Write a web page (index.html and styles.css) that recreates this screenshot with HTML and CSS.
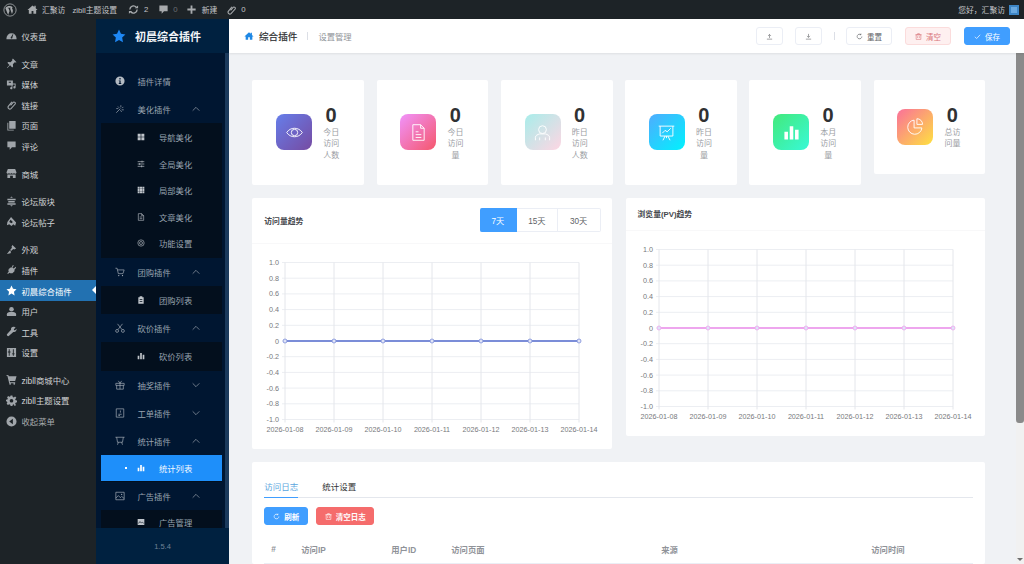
FILE: index.html
```html
<!DOCTYPE html>
<html lang="en">
<head>
  <meta charset="UTF-8" />
  <meta name="viewport" content="width=device-width, initial-scale=1.0" />
  <title>初晨综合插件</title>
  <link rel="stylesheet" href="styles.css">
</head>
<body>
  <svg class="sprite" xmlns="http://www.w3.org/2000/svg">
    <symbol id="i-wp" viewBox="0 0 24 24"><circle cx="12" cy="12" r="10.5" fill="none" stroke="currentColor" stroke-width="1.4"/><path fill="currentColor" d="M4 8.5l4.8 12.2 2.4-7-1.7-4.6-1.4-.2v-.7h5.200v.7l-1.300.2 3.400 9.900 1.300-4.200c.7-2.300-.2-3.600-.9-4.800-.5-1-.3-2.300 1-2.700-3.500-3.300-9.600-2.800-12.800 1.200z"/></symbol>
    <symbol id="i-home" viewBox="0 0 24 24"><path fill="currentColor" d="M12 3L1 13h3v8h6v-6h4v6h6v-8h3l-4-3.600V4h-3v2.700z"/></symbol>
    <symbol id="i-update" viewBox="0 0 24 24"><path fill="none" stroke="currentColor" stroke-width="3" d="M4 12a8 8 0 0 1 14-5M20 12a8 8 0 0 1-14 5"/><path fill="currentColor" d="M15 9h7V3zM9 15H2v6z"/></symbol>
    <symbol id="i-comment" viewBox="0 0 24 24"><path fill="currentColor" d="M3 3h18v13h-8l-5 5v-5H3z"/></symbol>
    <symbol id="i-plus" viewBox="0 0 24 24"><path fill="currentColor" d="M10 3h4v7h7v4h-7v7h-4v-7H3v-4h7z"/></symbol>
    <symbol id="i-link" viewBox="0 0 24 24"><path fill="none" stroke="currentColor" stroke-width="2.400" d="M10 14l6-7a3 3 0 0 1 4 4l-9 10a4 4 0 0 1-6-5l8-10"/></symbol>
    <symbol id="i-gauge" viewBox="0 0 24 24"><path fill="currentColor" d="M1 18a11 11 0 0 1 22 0v2H1zm10-3a2 2 0 1 0 3 1l2-7-1-.5z"/></symbol>
    <symbol id="i-pin" viewBox="0 0 24 24"><path fill="currentColor" d="M15 1l8 8-2 1-2-.5-4 4 .5 5-2 2-4.500-4.500L3 22l-1-1 5.500-6L3 10.500l2-2 5 .5 4-4L13.500 3z"/></symbol>
    <symbol id="i-media" viewBox="0 0 24 24"><path fill="currentColor" d="M2 3h13v11H2zm4 3v2h5V6zM21 10v8a2.500 2.500 0 1 1-2-2.400V12h-5v8a2.500 2.500 0 1 1-2-2.400V16h0l1-6z"/></symbol>
    <symbol id="i-pages" viewBox="0 0 24 24"><path fill="currentColor" d="M7 2h14v17H7zM3 6h2v15h12v2H3z"/></symbol>
    <symbol id="i-store" viewBox="0 0 24 24"><path fill="currentColor" d="M4 2h16l3 8a3 3 0 0 1-5.500 1 3 3 0 0 1-5.500 0 3 3 0 0 1-5.500 0A3 3 0 0 1 1 10zM3 14h18v8h-6v-5H9v5H3z"/></symbol>
    <symbol id="i-forum" viewBox="0 0 24 24"><path fill="currentColor" d="M12 1l3 3H9zM3 6h18v3H3zM5 11h14v3H5zM3 16h18v3H3zM9 20h6l-3 3z"/></symbol>
    <symbol id="i-post" viewBox="0 0 24 24"><path fill="currentColor" d="M11 2l11 12-2 7-4-3-4 4-5-4-5 2 1-7zM10 8l-3 5 5 3 3-3z"/></symbol>
    <symbol id="i-brush" viewBox="0 0 24 24"><path fill="currentColor" d="M14 2l8 8-4 2-2-1-5 4-2-2 4-5-1-2zM8 14l3 3-1 3-8 2 3-4z"/></symbol>
    <symbol id="i-plug" viewBox="0 0 24 24"><path fill="currentColor" d="M15 2l2 1-3 5 3 2 4-4 1 2-4 5 1 2-5 5c-3 1-5 0-6-1l-4 3-1-2 3-3c-1-2-1-4 0-6l5-4 1 1z"/></symbol>
    <symbol id="i-star" viewBox="0 0 24 24"><path fill="currentColor" d="M12 1l3.400 7.300 7.600 1-5.600 5.400 1.400 8L12 18.700 5.200 22.700l1.400-8L1 9.300l7.600-1z"/></symbol>
    <symbol id="i-user" viewBox="0 0 24 24"><circle cx="12" cy="7" r="5" fill="currentColor"/><path fill="currentColor" d="M2 22v-4c0-3 3-5 6-5h8c3 0 6 2 6 5v4z"/></symbol>
    <symbol id="i-tool" viewBox="0 0 24 24"><path fill="currentColor" d="M21 3l-4 4 1 2 2 .5 3-3.500c.5 4-2 8-7 7L6 22c-2 1-5-2-4-4l9-10c-1-5 4-8 8-6z"/></symbol>
    <symbol id="i-settings" viewBox="0 0 24 24"><path fill="currentColor" d="M2 2h20v20H2zm4 3v5H4v2h2v7h2v-7h2v-2H8V5zm9 0v9h-2v2h2v3h2v-3h2v-2h-2V5z"/></symbol>
    <symbol id="i-cart" viewBox="0 0 24 24"><path fill="currentColor" d="M1 2h4l1 3h17l-3 10H8l1 3h11v2H7L3 4H1z"/><circle cx="9" cy="21.500" r="2" fill="currentColor"/><circle cx="18" cy="21.500" r="2" fill="currentColor"/></symbol>
    <symbol id="i-gear" viewBox="0 0 24 24"><path fill="currentColor" fill-rule="evenodd" d="M10 1h4l.7 3.200 2.300 1 2.800-1.800 2.800 2.800L20 9l1 2.300 3 .7v4l-3 .7-1 2.300 1.800 2.800-2.800 2.800L17 20l-2.300 1-.7 3h-4l-.7-3L7 20l-2.800 1.800-2.800-2.800L3 16.200 2 14l-2-.5v-3l3-.7L4 7.500 2.200 5l2.800-2.800L7 4l2.300-.8zM12 8.500a4 4 0 1 0 0 8 4 4 0 0 0 0-8z"/></symbol>
    <symbol id="i-back" viewBox="0 0 24 24"><path fill="currentColor" fill-rule="evenodd" d="M12 1a11 11 0 1 1 0 22 11 11 0 0 1 0-22zm3 5l-8 6 8 6z"/></symbol>
    <symbol id="i-info" viewBox="0 0 24 24"><path fill="currentColor" fill-rule="evenodd" d="M12 1a11 11 0 1 1 0 22 11 11 0 0 1 0-22zm-1.500 4v3.500h3V5zM9 10.500V12h1.500v5H9v2h6v-2h-1.500v-6.500z"/></symbol>
    <symbol id="i-wand" viewBox="0 0 24 24"><path fill="none" stroke="currentColor" stroke-width="1.500" d="M3 21L13 11M14 3v5M20 7l-3 3M21 14h-5M13 15l3 4M7 6l3 3M3 11h5"/></symbol>
    <symbol id="i-grid4" viewBox="0 0 24 24"><path fill="currentColor" d="M2 2h9v9H2zM13 2h9v9h-9zM2 13h9v9H2zM13 13h9v9h-9z"/></symbol>
    <symbol id="i-sliders" viewBox="0 0 24 24"><path fill="none" stroke="currentColor" stroke-width="2" d="M2 5h20M2 12h20M2 19h20M15 2v6M8 9v6M14 16v6"/></symbol>
    <symbol id="i-grid9" viewBox="0 0 24 24"><path fill="currentColor" d="M2 2h6v6H2zM9 2h6v6H9zM16 2h6v6h-6zM2 9h6v6H2zM9 9h6v6H9zM16 9h6v6h-6zM2 16h6v6H2zM9 16h6v6H9zM16 16h6v6h-6z"/></symbol>
    <symbol id="i-doc" viewBox="0 0 24 24"><path fill="none" stroke="currentColor" stroke-width="1.800" d="M4 2h10l6 6v14H4zM14 2v6h6M8 12h8M8 17h8"/></symbol>
    <symbol id="i-target" viewBox="0 0 24 24"><circle cx="12" cy="12" r="9.500" fill="none" stroke="currentColor" stroke-width="1.800"/><circle cx="12" cy="12" r="4.500" fill="none" stroke="currentColor" stroke-width="1.800"/></symbol>
    <symbol id="i-cart-line" viewBox="0 0 24 24"><path fill="none" stroke="currentColor" stroke-width="1.500" d="M1 3h4l3 13h11l3-9H6"/><circle cx="9" cy="20.500" r="1.500" fill="currentColor"/><circle cx="18" cy="20.500" r="1.500" fill="currentColor"/></symbol>
    <symbol id="i-clip" viewBox="0 0 24 24"><path fill="currentColor" fill-rule="evenodd" d="M8 1h8v3h4v19H4V4h4zM8 10v2h8v-2zm0 5v2h8v-2z"/></symbol>
    <symbol id="i-scissors" viewBox="0 0 24 24"><circle cx="5" cy="19" r="3.500" fill="none" stroke="currentColor" stroke-width="1.500"/><circle cx="19" cy="19" r="3.500" fill="none" stroke="currentColor" stroke-width="1.500"/><path fill="none" stroke="currentColor" stroke-width="1.500" d="M7 16L18 2M17 16L6 2"/></symbol>
    <symbol id="i-bars" viewBox="0 0 24 24"><path fill="currentColor" d="M2 11h5v11H2zM9.500 3h5v19h-5zM17 8h5v14h-5z"/></symbol>
    <symbol id="i-gift" viewBox="0 0 24 24"><path fill="none" stroke="currentColor" stroke-width="1.500" d="M2 8h20v5H2zM4 13v9h16v-9M12 8v14M12 8L8 2M12 8l4-6"/></symbol>
    <symbol id="i-ticket" viewBox="0 0 24 24"><path fill="none" stroke="currentColor" stroke-width="1.500" d="M3 2h18v20H3zM8 15h8M8 18h4M13 6v5"/></symbol>
    <symbol id="i-cart-box" viewBox="0 0 24 24"><path fill="none" stroke="currentColor" stroke-width="1.500" d="M1 3h22M4 3l2 12h12l2-12M8 15l-2 6M16 15l2 6"/></symbol>
    <symbol id="i-image" viewBox="0 0 24 24"><path fill="none" stroke="currentColor" stroke-width="1.500" d="M2 3h20v18H2zM2 17l6-6 5 5 3-3 6 5"/><circle cx="16" cy="8" r="1.500" fill="currentColor"/></symbol>
    <symbol id="i-image-fill" viewBox="0 0 24 24"><path fill="currentColor" fill-rule="evenodd" d="M2 3h20v18H2zM4 17l5-5 4 4 3-3 4 4v-2l-4-4-3 3-4-4-5 5z"/></symbol>
    <symbol id="i-up" viewBox="0 0 24 24"><path fill="none" stroke="currentColor" stroke-width="2" d="M3 21h18M12 17V5M7 10l5-5 5 5"/></symbol>
    <symbol id="i-down" viewBox="0 0 24 24"><path fill="none" stroke="currentColor" stroke-width="2" d="M3 21h18M12 3v12M7 10l5 5 5-5"/></symbol>
    <symbol id="i-refresh" viewBox="0 0 24 24"><path fill="none" stroke="currentColor" stroke-width="2.200" d="M20 12a8 8 0 1 1-3-6.200M17 2v4h-4"/></symbol>
    <symbol id="i-trash" viewBox="0 0 24 24"><path fill="none" stroke="currentColor" stroke-width="2" d="M4 6h16v16H4zM1 6h22M9 6V2h6v4M9 11v6M15 11v6"/></symbol>
    <symbol id="i-check" viewBox="0 0 24 24"><path fill="none" stroke="currentColor" stroke-width="2.400" d="M3 13l6 6L21 6"/></symbol>
    <symbol id="i-chev-up" viewBox="0 0 24 24"><path fill="none" stroke="currentColor" stroke-width="1.800" d="M2 17l10-10 10 10"/></symbol>
    <symbol id="i-chev-down" viewBox="0 0 24 24"><path fill="none" stroke="currentColor" stroke-width="1.800" d="M2 7l10 10L22 7"/></symbol>
    <symbol id="i-eye" viewBox="0 0 24 24"><path fill="none" stroke="currentColor" stroke-width="1.300" d="M1 12c5-8 17-8 22 0-5 8-17 8-22 0z"/><circle cx="12" cy="12" r="4.500" fill="none" stroke="currentColor" stroke-width="1.300"/></symbol>
    <symbol id="i-file" viewBox="0 0 24 24"><path fill="none" stroke="currentColor" stroke-width="1.300" d="M4 1h11l5 5v17H4zM15 1v5h5M8 11h4M8 15h8M8 19h8"/></symbol>
    <symbol id="i-person" viewBox="0 0 24 24"><circle cx="12" cy="8" r="5.500" fill="none" stroke="currentColor" stroke-width="1.300"/><path fill="none" stroke="currentColor" stroke-width="1.300" d="M2 23v-4c0-3 3-4 6-5h8c3 1 6 2 6 5v4M8 19v4M16 19v4"/></symbol>
    <symbol id="i-board" viewBox="0 0 24 24"><path fill="none" stroke="currentColor" stroke-width="1.300" d="M1 3h22M3 3v14h18V3M12 17v3M7 23l3-6M17 23l-3-6M6 13l4-4 3 2 5-5"/></symbol>
    <symbol id="i-pie" viewBox="0 0 24 24"><path fill="none" stroke="currentColor" stroke-width="1.300" d="M10 3a10 10 0 1 0 11 11H10zM14 1v8h8a8 8 0 0 0-8-8z"/></symbol>
  </svg>

  <div class="adminbar">
    <div class="adminbar-left">
      <svg class="ab-logo"><use href="#i-wp"/></svg>
      <span class="ab-item ab-home"><svg class="ab-icon"><use href="#i-home"/></svg>汇聚访</span>
      <span class="ab-item ab-theme">zibll主题设置</span>
      <span class="ab-item ab-update"><svg class="ab-icon"><use href="#i-update"/></svg>2</span>
      <span class="ab-item ab-comment"><svg class="ab-icon"><use href="#i-comment"/></svg><em>0</em></span>
      <span class="ab-item ab-new"><svg class="ab-icon"><use href="#i-plus"/></svg>新建</span>
      <span class="ab-item ab-link"><svg class="ab-icon"><use href="#i-link"/></svg>0</span>
    </div>
    <div class="adminbar-right">您好，汇聚访<span class="avatar"></span></div>
  </div>

  <div class="layout">
    <aside class="wp-menu">
      <ul class="wp-group">
        <li><svg><use href="#i-gauge"/></svg>仪表盘</li>
      </ul>
      <ul class="wp-group">
        <li><svg><use href="#i-pin"/></svg>文章</li>
        <li><svg><use href="#i-media"/></svg>媒体</li>
        <li><svg><use href="#i-link"/></svg>链接</li>
        <li><svg><use href="#i-pages"/></svg>页面</li>
        <li><svg><use href="#i-comment"/></svg>评论</li>
      </ul>
      <ul class="wp-group">
        <li><svg><use href="#i-store"/></svg>商城</li>
      </ul>
      <ul class="wp-group">
        <li><svg><use href="#i-forum"/></svg>论坛版块</li>
        <li><svg><use href="#i-post"/></svg>论坛帖子</li>
      </ul>
      <ul class="wp-group">
        <li><svg><use href="#i-brush"/></svg>外观</li>
        <li><svg><use href="#i-plug"/></svg>插件</li>
        <li class="current"><svg><use href="#i-star"/></svg>初晨综合插件</li>
        <li><svg><use href="#i-user"/></svg>用户</li>
        <li><svg><use href="#i-tool"/></svg>工具</li>
        <li><svg><use href="#i-settings"/></svg>设置</li>
      </ul>
      <ul class="wp-group">
        <li><svg><use href="#i-cart"/></svg>zibll商城中心</li>
        <li><svg><use href="#i-gear"/></svg>zibll主题设置</li>
        <li class="collapse"><svg><use href="#i-back"/></svg>收起菜单</li>
      </ul>
    </aside>

    <aside class="plugin-side">
      <div class="plugin-brand"><svg><use href="#i-star"/></svg>初晨综合插件</div>
      <div class="plugin-body">
        <nav class="plugin-nav">
          <a class="nav-item"><svg><use href="#i-info"/></svg>插件详情</a>
          <a class="nav-item"><svg><use href="#i-wand"/></svg>美化插件<svg class="chev"><use href="#i-chev-up"/></svg></a>
          <div class="sub">
            <a class="sub-item"><svg><use href="#i-grid4"/></svg>导航美化</a>
            <a class="sub-item"><svg><use href="#i-sliders"/></svg>全局美化</a>
            <a class="sub-item"><svg><use href="#i-grid9"/></svg>局部美化</a>
            <a class="sub-item"><svg><use href="#i-doc"/></svg>文章美化</a>
            <a class="sub-item"><svg><use href="#i-target"/></svg>功能设置</a>
          </div>
          <a class="nav-item"><svg><use href="#i-cart-line"/></svg>团购插件<svg class="chev"><use href="#i-chev-up"/></svg></a>
          <div class="sub">
            <a class="sub-item"><svg><use href="#i-clip"/></svg>团购列表</a>
          </div>
          <a class="nav-item"><svg><use href="#i-scissors"/></svg>砍价插件<svg class="chev"><use href="#i-chev-up"/></svg></a>
          <div class="sub">
            <a class="sub-item"><svg><use href="#i-bars"/></svg>砍价列表</a>
          </div>
          <a class="nav-item"><svg><use href="#i-gift"/></svg>抽奖插件<svg class="chev"><use href="#i-chev-down"/></svg></a>
          <a class="nav-item"><svg><use href="#i-ticket"/></svg>工单插件<svg class="chev"><use href="#i-chev-down"/></svg></a>
          <a class="nav-item"><svg><use href="#i-cart-box"/></svg>统计插件<svg class="chev"><use href="#i-chev-up"/></svg></a>
          <div class="sub">
            <a class="sub-item active"><svg><use href="#i-bars"/></svg>统计列表</a>
          </div>
          <a class="nav-item"><svg><use href="#i-image"/></svg>广告插件<svg class="chev"><use href="#i-chev-up"/></svg></a>
          <div class="sub">
            <a class="sub-item sub-cut"><svg><use href="#i-image-fill"/></svg>广告管理</a>
          </div>
        </nav>
        <div class="plugin-scroll"></div>
      </div>
      <div class="plugin-foot">1.5.4</div>
    </aside>

    <main class="main">
      <header class="topbar">
        <div class="crumb">
          <svg><use href="#i-home"/></svg>
          <strong>综合插件</strong>
          <i class="divider"></i>
          <span>设置管理</span>
        </div>
        <div class="actions">
          <button class="btn btn-icon"><svg><use href="#i-up"/></svg></button>
          <button class="btn btn-icon"><svg><use href="#i-down"/></svg></button>
          <i class="divider"></i>
          <button class="btn"><svg><use href="#i-refresh"/></svg>重置</button>
          <button class="btn btn-danger"><svg><use href="#i-trash"/></svg>清空</button>
          <button class="btn btn-primary"><svg><use href="#i-check"/></svg>保存</button>
        </div>
      </header>

      <div class="scroller">
        <div class="content">
          <section class="stats">
            <div class="stat"><div class="stat-icon g1"><svg><use href="#i-eye"/></svg></div><div class="stat-text"><b>0</b><span>今日访问人数</span></div></div>
            <div class="stat"><div class="stat-icon g2"><svg><use href="#i-file"/></svg></div><div class="stat-text"><b>0</b><span>今日访问量</span></div></div>
            <div class="stat"><div class="stat-icon g3"><svg><use href="#i-person"/></svg></div><div class="stat-text"><b>0</b><span>昨日访问人数</span></div></div>
            <div class="stat"><div class="stat-icon g4"><svg><use href="#i-board"/></svg></div><div class="stat-text"><b>0</b><span>昨日访问量</span></div></div>
            <div class="stat"><div class="stat-icon g5"><svg><use href="#i-bars"/></svg></div><div class="stat-text"><b>0</b><span>本月访问量</span></div></div>
            <div class="stat"><div class="stat-icon g6"><svg><use href="#i-pie"/></svg></div><div class="stat-text"><b>0</b><span>总访问量</span></div></div>
          </section>

          <section class="charts">
            <div class="panel">
              <div class="panel-head panel-head-tall">
                <h3>访问量趋势</h3>
                <div class="range">
                  <span class="on">7天</span><span>15天</span><span>30天</span>
                </div>
              </div>
              <svg class="chart" id="chart-uv" data-color="#7b8dd8"></svg>
            </div>
            <div class="panel">
              <div class="panel-head">
                <h3>浏览量(PV)趋势</h3>
              </div>
              <svg class="chart" id="chart-pv" data-color="#eea6ee"></svg>
            </div>
          </section>

          <section class="panel logs">
            <div class="tabs">
              <span class="tab on">访问日志</span>
              <span class="tab">统计设置</span>
            </div>
            <div class="log-actions">
              <button class="btn btn-primary"><svg><use href="#i-refresh"/></svg>刷新</button>
              <button class="btn btn-red"><svg><use href="#i-trash"/></svg>清空日志</button>
            </div>
            <table class="log-table">
              <thead>
                <tr>
                  <th class="c-id">#</th>
                  <th class="c-ip">访问IP</th>
                  <th class="c-user">用户ID</th>
                  <th class="c-page">访问页面</th>
                  <th class="c-from">来源</th>
                  <th>访问时间</th>
                </tr>
              </thead>
            </table>
          </section>
        </div>
        <div class="page-scroll">
          <div class="page-thumb"></div>
          <div class="page-arrow"></div>
        </div>
      </div>
    </main>
  </div>

  <script src="charts.js"></script>
</body>
</html>
```
FILE: styles.css
```css
* {
  box-sizing: border-box;
}
html, body {
  margin: 0;
  height: 564px;
  overflow: hidden;
}
body {
  background: #f0f2f5;
  font-family: "Liberation Sans", "Noto Sans CJK SC", sans-serif;
  font-size: 8.3px;
  color: #333;
}
ul {
  list-style: none;
  margin: 0;
  padding: 0;
}
.sprite {
  display: none;
}

/* admin bar */
.adminbar {
  height: 19px;
  background: #1d2327;
  color: #c3c4c7;
  display: flex;
  justify-content: space-between;
  align-items: center;
  padding-left: 3px;
  padding-right: 5px;
  font-size: 7.800px;
}
.adminbar-left {
  display: flex;
  align-items: center;
}
.ab-logo {
  width: 14px;
  height: 14px;
  color: #a7aaad;
  margin-right: 10px;
}
.ab-item {
  display: flex;
  align-items: center;
}
.ab-icon {
  width: 11px;
  height: 11px;
  color: #a7aaad;
  margin-right: 4px;
}
.ab-item em {
  font-style: normal;
  color: #6b7075;
}
.ab-theme { margin-left: 7px; }
.ab-update { margin-left: 11px; }
.ab-comment { margin-left: 10px; }
.ab-new { margin-left: 8px; }
.ab-link { margin-left: 9px; }
.ab-update .ab-icon { margin-right: 5px; }
.ab-comment .ab-icon { margin-right: 4px; }
.ab-new .ab-icon { margin-right: 5px; }
.ab-link .ab-icon { margin-right: 4px; }
.adminbar-right {
  display: flex;
  align-items: center;
}
.avatar {
  width: 10px;
  height: 10px;
  margin-left: 4px;
  background: #6aa9e0;
  border: 2px solid #3d86c6;
}

.layout {
  display: flex;
  height: 545px;
}

/* wordpress menu */
.wp-menu {
  width: 96px;
  flex: none;
  background: #1d2327;
  color: #d0d2d4;
  padding-top: 6.7px;
}
.wp-group {
  margin-bottom: 7px;
}
.wp-group li {
  height: 20.6px;
  display: flex;
  align-items: center;
  position: relative;
  font-size: 8.4px;
}
.wp-group svg {
  width: 11px;
  height: 11px;
  margin: 0 5px 0 5.500px;
  color: #a0a5aa;
}
.wp-group .current {
  background: #2271b1;
  color: #fff;
}
.wp-group .current svg {
  color: #fff;
}
.wp-group .current::after {
  content: "";
  position: absolute;
  right: 0;
  top: 6px;
  border: 4.500px solid transparent;
  border-right-color: #fff;
  border-left-width: 0;
}
.wp-group .collapse {
  color: #a7aaad;
}

/* plugin sidebar */
.plugin-side {
  width: 133px;
  flex: none;
  background: #001529;
  display: flex;
  flex-direction: column;
}
.plugin-brand {
  height: 34px;
  flex: none;
  background: #002140;
  color: #f2f5f8;
  font-size: 11px;
  font-weight: bold;
  display: flex;
  align-items: center;
  padding-left: 16px;
}
.plugin-brand svg {
  width: 14px;
  height: 14px;
  color: #1e88f5;
  margin-right: 9px;
}
.plugin-body {
  flex: 1;
  min-height: 0;
  display: flex;
}
.plugin-nav {
  flex: 1;
  padding: 14px 3px 0 5px;
  overflow: hidden;
  background: #001631;
  color: #98a3af;
}
.plugin-scroll {
  width: 4px;
  flex: none;
  background: #1b3a5c;
}
.nav-item {
  height: 28px;
  display: flex;
  align-items: center;
  padding-left: 14px;
}
.nav-item svg {
  width: 10px;
  height: 10px;
  margin-right: 12.500px;
  color: #b4bbc3;
}
.nav-item .chev {
  width: 8px;
  height: 8px;
  margin: 0 22px 0 auto;
}
.sub {
  background: #030f1d;
  padding: 1px 0;
}
.sub-item {
  height: 26.500px;
  display: flex;
  align-items: center;
  padding-left: 36px;
  position: relative;
}
.sub-cut {
  height: 22px;
}
.sub-item svg {
  width: 8px;
  height: 8px;
  margin-right: 14px;
  color: #c0c5cb;
}
.sub-item.active {
  background: #1e8ffa;
  color: #f4f9ff;
  margin-top: -1px;
}
.sub-item.active svg {
  color: #fff;
}
.sub-item.active::before {
  content: "";
  position: absolute;
  left: 24px;
  top: 12px;
  width: 2px;
  height: 2px;
  background: #fff;
}
.plugin-foot {
  height: 36px;
  flex: none;
  background: #002140;
  color: #6f8297;
  font-size: 7.500px;
  display: flex;
  align-items: center;
  justify-content: center;
}

/* main */
.main {
  flex: 1;
  min-width: 0;
  display: flex;
  flex-direction: column;
}
.topbar {
  height: 34px;
  flex: none;
  background: #fff;
  box-shadow: 0 1px 2px rgba(0,0,0,0.08);
  display: flex;
  justify-content: space-between;
  align-items: center;
  padding: 0 14px 0 15px;
  position: relative;
}
.crumb {
  display: flex;
  align-items: center;
  color: #8f9399;
}
.crumb svg {
  width: 10px;
  height: 10px;
  color: #1e88e5;
  margin-right: 5px;
}
.crumb strong {
  font-size: 9.600px;
  font-weight: normal;
  color: #303133;
  -webkit-text-stroke: 0.2px #303133;
}
.divider {
  width: 1px;
  height: 8px;
  background: #dcdfe6;
  margin: 0 10px;
}
.actions {
  display: flex;
  align-items: center;
  gap: 13px;
}
.actions .divider {
  margin: 0 -1.500px;
}
.btn {
  height: 18.500px;
  padding: 0;
  border: 1px solid #ebeef5;
  border-radius: 3px;
  background: #fff;
  color: #606266;
  font: inherit;
  font-size: 7.500px;
  white-space: nowrap;
  display: flex;
  align-items: center;
  justify-content: center;
  width: 46px;
}
.btn svg {
  width: 7px;
  height: 7px;
  margin-right: 4px;
  flex: none;
}
.btn-icon {
  width: 27px;
}
.btn-icon + .btn-icon {
  margin-left: -1px;
}
.btn-icon svg {
  margin: 0;
}
.btn-danger {
  background: #fef0f0;
  border-color: #fbdcdc;
  color: #d9757a;
}
.btn-primary {
  background: #409eff;
  border-color: #409eff;
  color: #fff;
}
.btn-red {
  background: #f56c6c;
  border-color: #f56c6c;
  color: #fff;
}
.scroller {
  flex: 1;
  min-height: 0;
  display: flex;
}
.content {
  flex: 1;
  min-width: 0;
  padding: 27px 30.700px 0 23.300px;
  overflow: hidden;
}
.page-scroll {
  width: 8px;
  flex: none;
  background: #f1f1f1;
  display: flex;
  flex-direction: column;
  justify-content: space-between;
  align-items: center;
}
.page-thumb {
  width: 100%;
  height: 370px;
  background: #8a8a8a;
  border-radius: 0 0 3px 3px;
}
.page-arrow {
  border: 3px solid transparent;
  border-top: 3px solid #6f6f6f;
  border-bottom: 0;
  margin-bottom: 3px;
}

/* stat cards */
.stats {
  display: grid;
  grid-template-columns: repeat(6, 1fr);
  gap: 12.500px;
  align-items: start;
}
.stat {
  background: #fff;
  border-radius: 2px;
  padding: 24px 0;
  display: flex;
  align-items: center;
  justify-content: center;
  gap: 10px;
}
.stat-icon {
  width: 36px;
  height: 36px;
  border-radius: 8px;
  color: #fff;
  display: flex;
  align-items: center;
  justify-content: center;
}
.stat-icon svg {
  width: 17px;
  height: 17px;
}
.g1 { background: linear-gradient(135deg, #667eea, #764ba2); }
.g2 { background: linear-gradient(135deg, #f093fb, #f5576c); }
.g3 { background: linear-gradient(135deg, #a8edea, #fed6e3); }
.g4 { background: linear-gradient(135deg, #4facfe, #00f2fe); }
.g5 { background: linear-gradient(135deg, #43e97b, #38f9d7); }
.g6 { background: linear-gradient(135deg, #fa709a, #fee140); }
.stat-text {
  width: 18px;
  text-align: center;
  color: #9a9da3;
}
.stat-text b {
  display: block;
  font-size: 20px;
  line-height: 23px;
  margin: 0 -6px;
  color: #303133;
}
.stat-text span {
  display: block;
  font-size: 8px;
  line-height: 11.300px;
}

/* chart panels */
.panel {
  background: #fff;
  border-radius: 2px;
}
.charts {
  display: grid;
  grid-template-columns: 1fr 1fr;
  gap: 13.500px;
  align-items: start;
  margin-top: 13px;
}
.panel-head {
  height: 33px;
  border-bottom: 1px solid #f8f8f9;
  display: flex;
  justify-content: space-between;
  align-items: center;
  padding: 0 12px;
}
.panel-head-tall {
  height: 46px;
  padding-right: 11.500px;
}
.panel-head h3 {
  margin: 0;
  font-size: 7.800px;
  font-weight: bold;
  color: #45484d;
}
.range {
  display: flex;
  font-size: 8.200px;
  color: #606266;
}
.range span {
  width: 40.500px;
  height: 24px;
  border: 1px solid #ebeef5;
  border-left: 0;
  display: flex;
  align-items: center;
  justify-content: center;
}
.range .on {
  width: 37.500px;
  background: #409eff;
  border-color: #409eff;
  color: #fff;
  border-radius: 2px 0 0 2px;
}
.range span:last-child {
  width: 43px;
  border-radius: 0 2px 2px 0;
}
.chart {
  display: block;
  width: 100%;
  height: 205px;
}

/* log panel */
.logs {
  margin-top: 13px;
  padding: 0 12px;
}
.tabs {
  display: flex;
  gap: 24px;
  height: 36px;
  border-bottom: 1px solid #e4e7ed;
  font-size: 8.500px;
  color: #303133;
}
.tab {
  width: 34px;
  padding-top: 18px;
  white-space: nowrap;
}
.tab.on {
  color: #5aa6de;
  border-bottom: 1px solid #409eff;
  height: 36px;
}
.log-actions {
  display: flex;
  gap: 8px;
  margin-top: 9px;
}
.log-actions .btn {
  font-weight: bold;
}
.log-actions .btn-primary {
  width: 44px;
}
.log-actions .btn-red {
  width: 58px;
}
.log-table {
  width: 100%;
  border-collapse: collapse;
  table-layout: fixed;
  margin-top: 10px;
}
.log-table th {
  height: 28px;
  padding: 0 7px;
  text-align: left;
  font-size: 8.300px;
  color: #909399;
  border-bottom: 1px solid #ebeef5;
}
.c-id { width: 30px; }
.c-ip { width: 90px; }
.c-user { width: 60px; }
.c-page { width: 210px; }
.c-from { width: 210px; }
```
FILE: charts.js
```js
const SVG_NS = 'http://www.w3.org/2000/svg';
const dates = ['2026-01-08', '2026-01-09', '2026-01-10', '2026-01-11', '2026-01-12', '2026-01-13', '2026-01-14'];
const yLabels = ['1.0', '0.8', '0.6', '0.4', '0.2', '0', '-0.2', '-0.4', '-0.6', '-0.8', '-1.0'];

const plot = { left: 33, right: 327, top: 18.5, bottom: 175.5 };

function add(svg, tag, attrs, text) {
  const el = document.createElementNS(SVG_NS, tag);
  Object.keys(attrs).forEach((k) => el.setAttribute(k, attrs[k]));
  if (text) el.textContent = text;
  svg.appendChild(el);
}

function drawChart(svg) {
  const color = svg.dataset.color;
  const stepX = (plot.right - plot.left) / 6;
  const stepY = (plot.bottom - plot.top) / 10;
  const font = { 'font-size': '7.2', fill: '#77797d' };

  yLabels.forEach((label, i) => {
    const y = plot.top + i * stepY;
    add(svg, 'line', { x1: plot.left - 3, x2: plot.right, y1: y, y2: y, stroke: '#eceef2' });
    add(svg, 'text', { x: plot.left - 6, y: y + 2.5, 'text-anchor': 'end', ...font }, label);
  });

  dates.forEach((date, i) => {
    const x = plot.left + i * stepX;
    add(svg, 'line', { x1: x, x2: x, y1: plot.top, y2: plot.bottom + 3, stroke: '#e4e6eb' });
    add(svg, 'text', { x: x, y: plot.bottom + 12.5, 'text-anchor': 'middle', ...font }, date);
  });

  const zero = plot.top + 5 * stepY;
  add(svg, 'line', { x1: plot.left, x2: plot.right, y1: zero, y2: zero, stroke: color, 'stroke-width': 2 });
  dates.forEach((date, i) => {
    add(svg, 'circle', { cx: plot.left + i * stepX, cy: zero, r: 2, fill: '#dfe3f7', stroke: color, 'stroke-width': 0.8 });
  });
}

document.querySelectorAll('.chart').forEach(drawChart);
```
